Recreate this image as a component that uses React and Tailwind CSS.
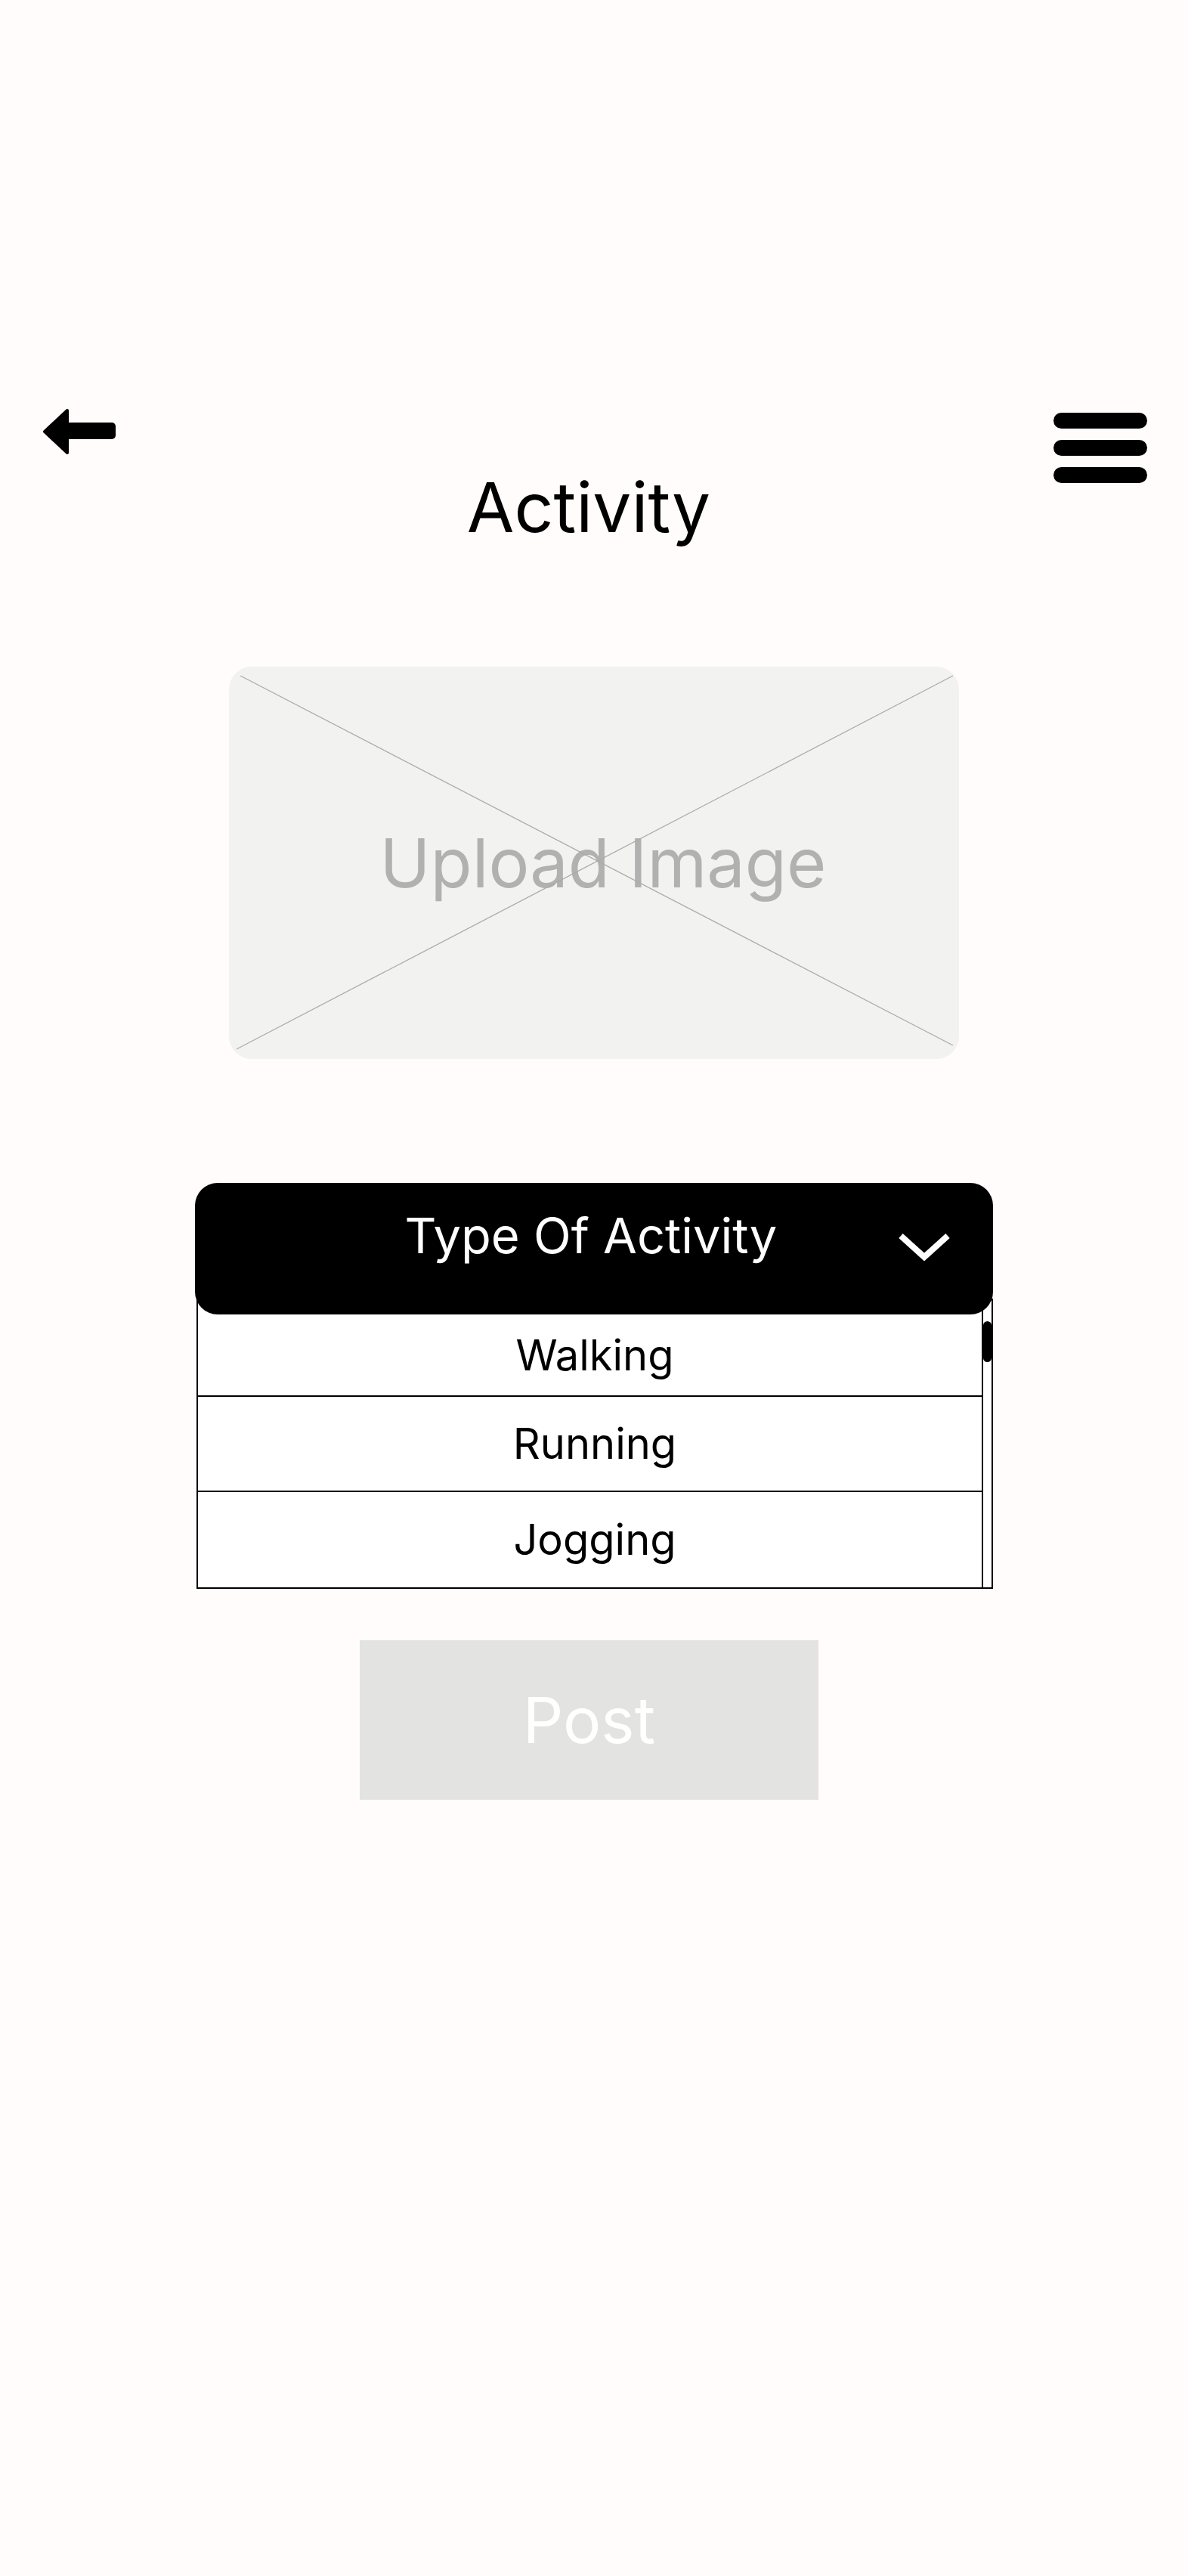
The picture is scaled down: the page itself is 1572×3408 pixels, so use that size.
import React from 'react';

const options = ['Walking', 'Running', 'Jogging'];

const BackArrow = () => (
  <svg width="96" height="60" viewBox="0 0 96 60" fill="black">
    <polygon points="2,30 32,2 32,58" stroke="black" strokeWidth="4" strokeLinejoin="round" />
    <rect x="28" y="18" width="68" height="22" rx="5" />
  </svg>
);

const Chevron = () => (
  <svg width="70" height="38" viewBox="0 0 70 38" fill="none">
    <polyline points="4,4 35,32 66,4" stroke="white" strokeWidth="8" strokeLinejoin="miter" />
  </svg>
);

const App = () => {
  return (
    <div className="min-h-[3408px] w-full bg-[#fffcfb] font-['Inter',sans-serif] text-black">
      {/* top bar */}
      <header className="flex h-[626px] items-start justify-between pl-[57px] pr-[54px] pt-[541px]">
        <button aria-label="Back">
          <BackArrow />
        </button>
        <button aria-label="Menu" className="mt-[5px] flex flex-col gap-[15px]">
          <span className="block h-[21px] w-[124px] rounded-full bg-black" />
          <span className="block h-[21px] w-[124px] rounded-full bg-black" />
          <span className="block h-[21px] w-[124px] rounded-full bg-black" />
        </button>
      </header>

      <h1 className="pr-[14px] text-center text-[91px] font-normal leading-none">Activity</h1>

      {/* image placeholder */}
      <div className="mx-auto mt-[165px] flex h-[519px] w-[966px] items-center justify-center rounded-[30px] bg-[#f2f2f1] relative overflow-hidden">
        <svg className="absolute inset-0" width="966" height="519" viewBox="0 0 966 519">
          <line x1="15" y1="12" x2="958" y2="501" stroke="#ababab" strokeWidth="1.3" />
          <line x1="958" y1="12" x2="10" y2="506" stroke="#ababab" strokeWidth="1.3" />
        </svg>
        <span className="pl-[24px] text-[90px] leading-none text-[#b2b1b1]">Upload Image</span>
      </div>

      {/* activity dropdown */}
      <div className="mx-auto mt-[164px] w-[1056px]">
        <div className="relative z-10 grid h-[174px] grid-cols-[1fr_auto_1fr] items-start rounded-[30px] bg-black">
          <div />
          <span className="pr-[8px] pt-[37px] text-[65px] leading-none text-white">Type Of Activity</span>
          <div className="mr-[56px] mt-[66px] justify-self-end">
            <Chevron />
          </div>
        </div>
        <div className="-mt-[21px] ml-[2px] flex h-[384px] w-[1054px] border-2 border-black bg-white">
          <ul className="flex flex-1 flex-col border-r-2 border-black">
            {options.map((opt, i) => (
              <li
                key={opt}
                className={
                  i === 0
                    ? 'flex h-[128px] items-center justify-center border-b-2 border-black pl-[13px] pt-[19px] text-[56px] leading-none'
                    : i === 1
                    ? 'flex h-[126px] items-center justify-center border-b-2 border-black pl-[13px] text-[56px] leading-none'
                    : 'flex flex-1 items-center justify-center pl-[13px] text-[56px] leading-none'
                }
              >
                {opt}
              </li>
            ))}
          </ul>
          <div className="w-[11px]">
            <div className="mt-[28px] h-[54px] w-full rounded-full bg-black" />
          </div>
        </div>
      </div>

      <div className="mt-[68px] flex justify-center pr-[13px]">
        <button className="flex h-[211px] w-[607px] items-center justify-center bg-[#e3e3e1] text-[84px] leading-none text-white">
          Post
        </button>
      </div>
    </div>
  );
};

export default App;
